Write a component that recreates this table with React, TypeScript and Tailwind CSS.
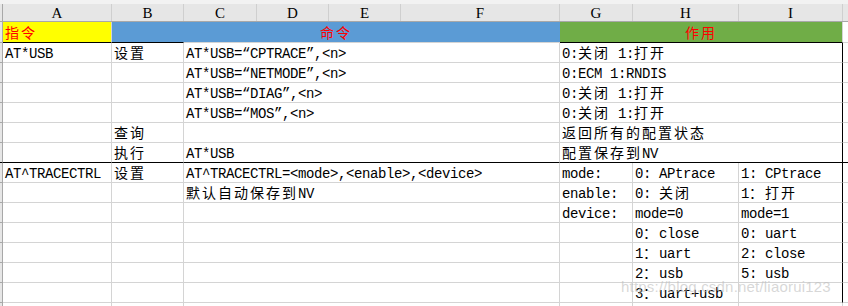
import React from 'react';

const CJK = /[\u3000-\u9fff\uff00-\uffef]/;

// splits a cell string into CJK and latin runs so each gets the SimSun-like advance
const Txt: React.FC<{ s: string }> = ({ s }) => (
  <span className="whitespace-pre">
    {s.split(/([\u3000-\u9fff\uff00-\uffef]+)/).map((p, i) =>
      p === '' ? null : CJK.test(p) ? (
        <span key={i} className="font-['Noto_Sans_CJK_SC',sans-serif] tracking-[2px]">{p}</span>
      ) : (
        <span key={i} className="tracking-[-0.4px]">{p}</span>
      )
    )}
  </span>
);

const letters: { l: string; w: string }[] = [
  { l: 'A', w: 'w-[109px]' },
  { l: 'B', w: 'w-[72px]' },
  { l: 'C', w: 'w-[73px]' },
  { l: 'D', w: 'w-[72px]' },
  { l: 'E', w: 'w-[72px]' },
  { l: 'F', w: 'w-[159px]' },
  { l: 'G', w: 'w-[73px]' },
  { l: 'H', w: 'w-[106px]' },
  { l: 'I', w: 'w-[104px]' },
];

type Row = {
  a?: string;
  b?: string;
  cf?: string;
  g?: string;
  h?: string;
  i?: string;
  gSpan?: boolean;
  blackBottom?: boolean;
  blackRight?: boolean;
};

const rows: Row[] = [
  { a: 'AT*USB', b: '设置', cf: 'AT*USB=“CPTRACE”,<n>', g: '0:关闭 1:打开', gSpan: true, blackRight: true },
  { cf: 'AT*USB=“NETMODE”,<n>', g: '0:ECM 1:RNDIS', gSpan: true, blackRight: true },
  { cf: 'AT*USB=“DIAG”,<n>', g: '0:关闭 1:打开', gSpan: true, blackRight: true },
  { cf: 'AT*USB=“MOS”,<n>', g: '0:关闭 1:打开', gSpan: true, blackRight: true },
  { b: '查询', g: '返回所有的配置状态', gSpan: true, blackRight: true },
  { b: '执行', cf: 'AT*USB', g: '配置保存到NV', gSpan: true, blackBottom: true, blackRight: true },
  { a: 'AT^TRACECTRL', b: '设置', cf: 'AT^TRACECTRL=<mode>,<enable>,<device>', g: 'mode:', h: '0: APtrace', i: '1: CPtrace', blackRight: true },
  { cf: '默认自动保存到NV', g: 'enable:', h: '0: 关闭', i: '1：打开', blackRight: true },
  { g: 'device:', h: 'mode=0', i: 'mode=1', blackRight: true },
  { h: '0：close', i: '0: uart', blackRight: true },
  { h: '1：uart', i: '2: close', blackRight: true },
  { h: '2：usb', i: '5: usb', blackRight: true },
  { h: '3：uart+usb', blackRight: true },
  { b: '查询' },
];

const cell = 'flex items-end pl-[2px] whitespace-nowrap border-r border-b border-[#d4d4d4]';

export default function App() {
  return (
    <div className="relative w-[848px] h-[306px] overflow-hidden bg-white text-black text-[14px] leading-[16px] font-['Liberation_Mono','Noto_Sans_CJK_SC',monospace]">
      {/* column letters */}
      <div className="flex h-[22px] bg-[#e6e6e6] border-t-[4px] border-t-[#f2f2f2] border-b border-b-[#a8a8a8]">
        <div className="w-[3px] border-r border-[#a8a8a8]" />
        {letters.map((c) => (
          <div
            key={c.l}
            className={`${c.w} flex items-center justify-center border-r border-[#cfcfcf] font-['Liberation_Serif',serif] text-[15px]`}
          >
            {c.l}
          </div>
        ))}
        <div className="flex-1" />
      </div>

      <div className="grid grid-cols-[3px_109px_72px_376px_73px_106px_104px_1fr]">
        {/* title row */}
        <div className="h-[21px] bg-[#e6e6e6] border-r border-b border-[#a8a8a8]" />
        <div className={`${cell} bg-[#ffff00] text-[#ff0000] border-b-black`}>
          <Txt s="指令" />
        </div>
        <div className="col-span-2 flex items-end justify-center bg-[#5b9bd5] text-[#ff0000] border-b border-[#d4d4d4]">
          <Txt s="命令" />
        </div>
        <div className="col-span-3 flex items-end justify-center bg-[#70ad47] text-[#ff0000] border-r border-r-[#d4d4d4] border-b border-b-black">
          <Txt s="作用" />
        </div>
        <div className="border-b border-[#d4d4d4]" />

        {rows.map((r, idx) => {
          const bb = r.blackBottom ? 'border-b-black' : '';
          return (
            <React.Fragment key={idx}>
              <div className={`h-[20px] bg-[#e6e6e6] border-r border-r-[#a8a8a8] border-b ${r.blackBottom ? 'border-b-black' : 'border-b-[#a8a8a8]'}`} />
              <div className={`${cell} ${idx === 0 ? 'border-t border-t-black h-[21px] -mt-px' : ''} ${bb}`}>
                {r.a && <Txt s={r.a} />}
              </div>
              <div className={`${cell} ${idx === 0 ? 'border-t border-t-black h-[21px] -mt-px' : ''} ${bb}`}>
                {r.b && <Txt s={r.b} />}
              </div>
              <div className={`${cell} ${bb}`}>{r.cf && <Txt s={r.cf} />}</div>
              {r.gSpan ? (
                <div className={`${cell} col-span-3 ${r.blackRight ? 'border-r-black' : ''} ${bb}`}>
                  {r.g && <Txt s={r.g} />}
                </div>
              ) : (
                <>
                  <div className={`${cell} ${bb}`}>{r.g && <Txt s={r.g} />}</div>
                  <div className={`${cell} ${bb}`}>{r.h && <Txt s={r.h} />}</div>
                  <div className={`${cell} ${r.blackRight ? 'border-r-black' : ''} ${bb}`}>{r.i && <Txt s={r.i} />}</div>
                </>
              )}
              <div className={`border-b ${bb || 'border-[#d4d4d4]'}`} />
            </React.Fragment>
          );
        })}
      </div>

      {/* csdn watermark */}
      <div className="absolute left-[621px] top-[278px] font-['Liberation_Sans',sans-serif] text-[15px] leading-[18px] tracking-[0.2px] text-[#bdbdbd]/60 pointer-events-none">
        https://blog.csdn.net/liaorui123
      </div>
    </div>
  );
}
